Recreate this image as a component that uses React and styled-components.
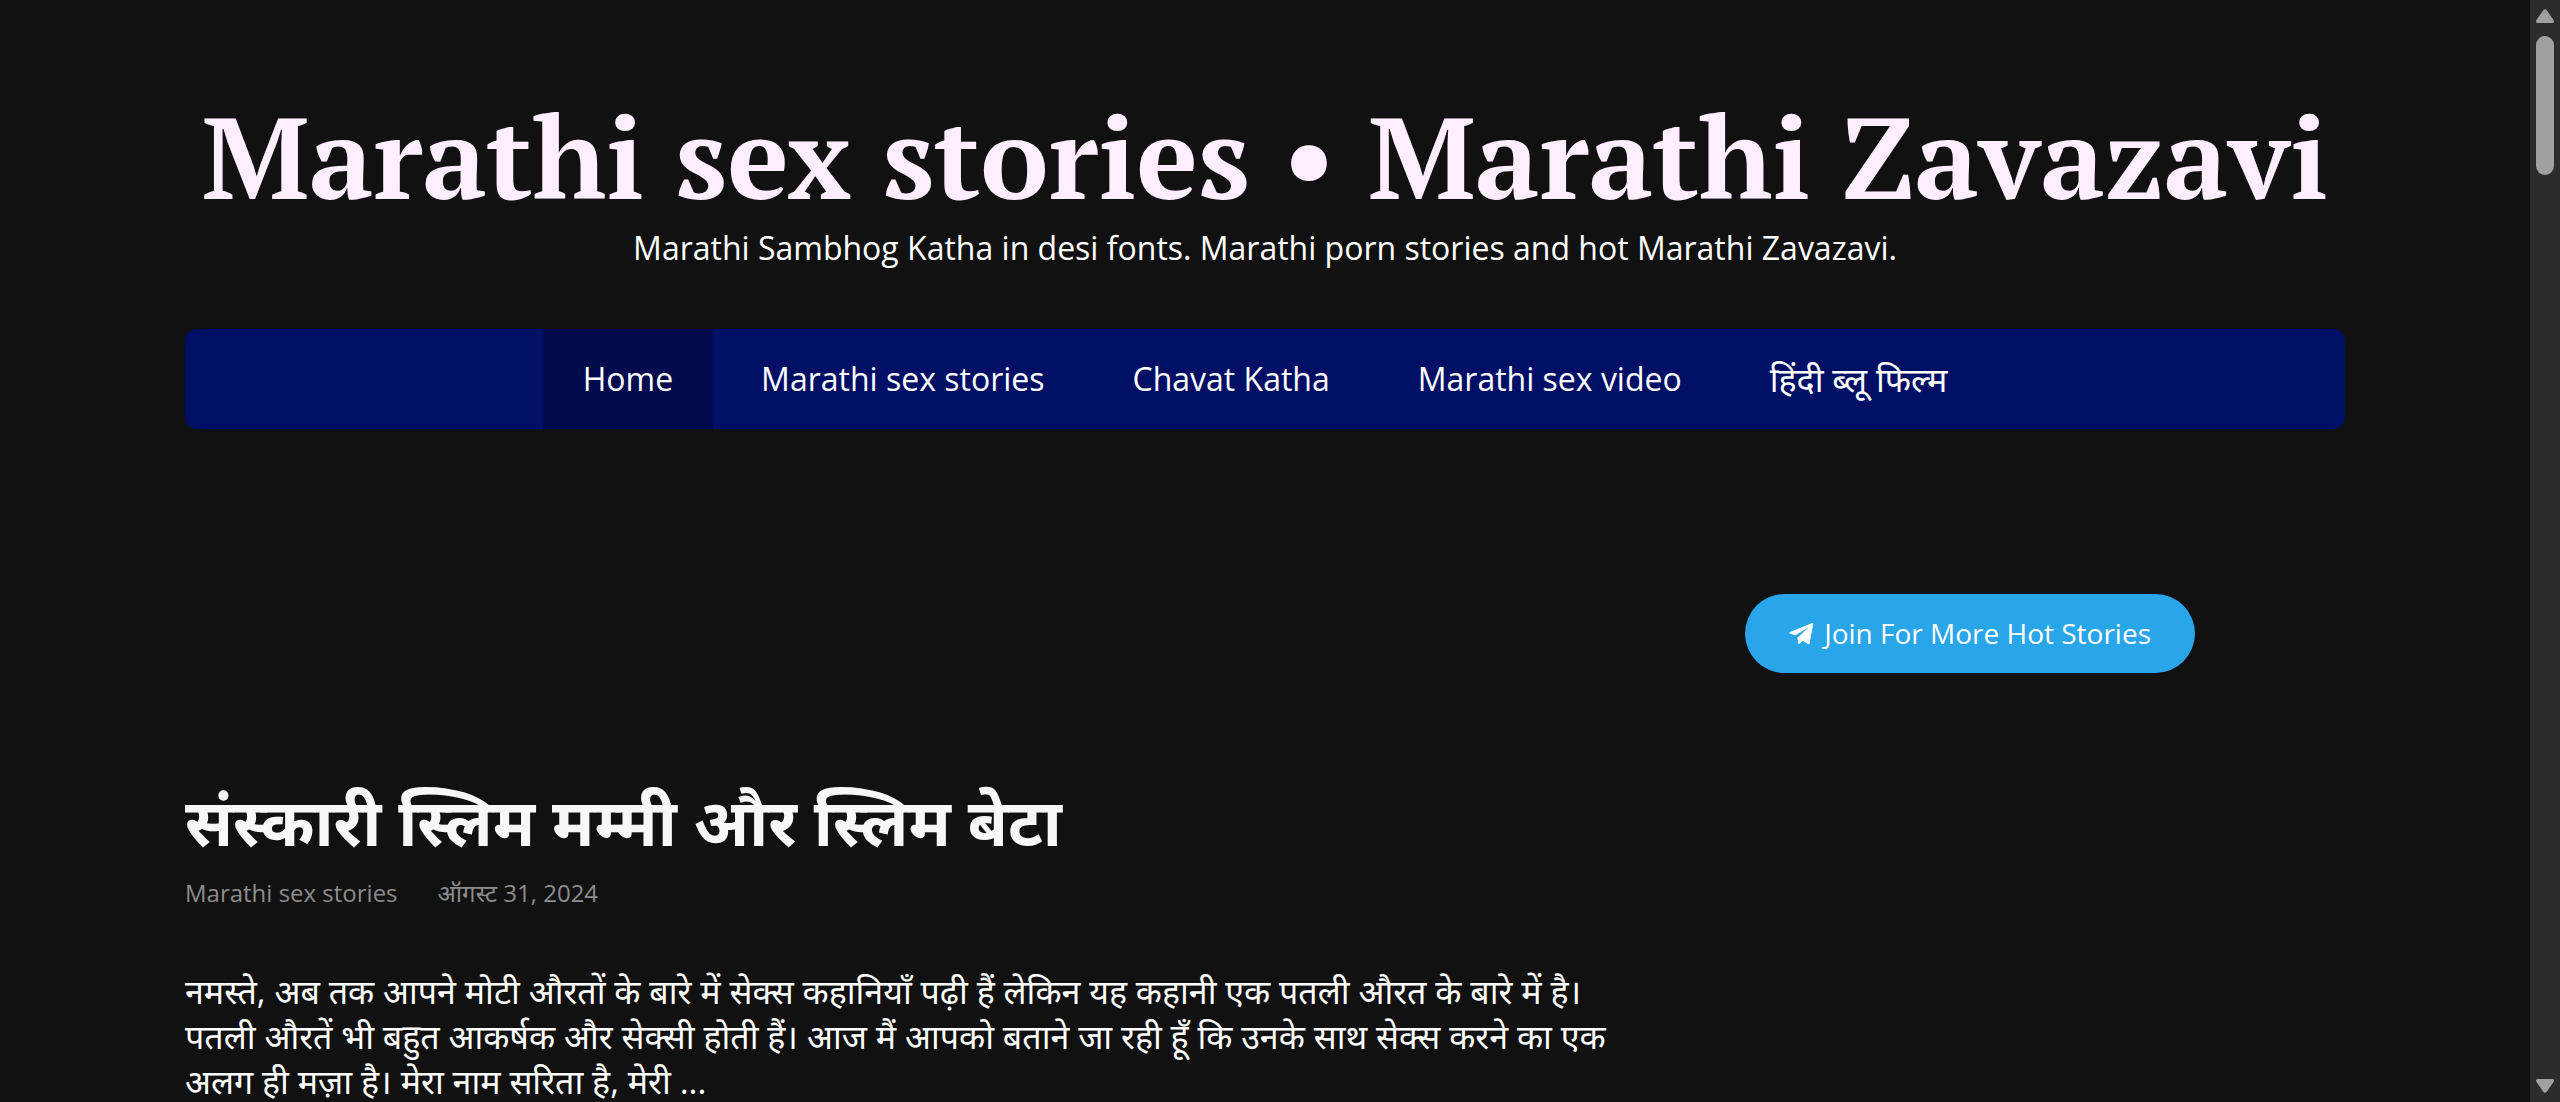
import React from "react";
import styled, { createGlobalStyle } from "styled-components";

const GlobalStyle = createGlobalStyle`
  * {
    box-sizing: border-box;
  }
  body {
    margin: 0;
    background-color: #111111;
    color: #ffffff;
    font-family: "Open Sans", "Noto Sans", "Noto Sans Devanagari", sans-serif;
    font-size: 32px;
    line-height: 45px;
  }
  a {
    color: inherit;
    text-decoration: none;
  }
`;

const Window = styled.div`
  display: flex;
  height: 100vh;
  overflow: hidden;
`;

const Page = styled.div`
  flex: 1;
  min-width: 0;
  padding: 91px 16px 0;
`;

const Container = styled.div`
  width: 100%;
  max-width: 2160px;
  margin: 0 auto;
`;

const Header = styled.header`
  text-align: center;
`;

const SiteTitle = styled.h1`
  margin: 0;
  color: #ffeeff;
  font-family: "PT Serif", "Liberation Serif", serif;
  font-size: 115px;
  font-weight: bold;
  line-height: 130px;
`;

const Tagline = styled.p`
  margin: 4px 0 0;
`;

const Nav = styled.nav`
  display: flex;
  justify-content: center;
  gap: 8px;
  margin-top: 59px;
  border-radius: 12px;
  background-color: #000f66;
`;

const NavLink = styled.a`
  padding: 0 40px;
  font-size: ${(props) => (props.lang === "hi" ? "34px" : "32px")};
  line-height: 100px;
  background-color: ${(props) => (props.$active ? "#000a4d" : "transparent")};
`;

const Promo = styled.aside`
  display: flex;
  justify-content: flex-end;
  padding: 165px 150px 0 0;
`;

const JoinLink = styled.a`
  display: flex;
  align-items: center;
  gap: 10px;
  height: 79px;
  padding: 0 44px;
  border-radius: 40px;
  background-color: #29a5e9;
  font-size: 28px;
`;

const Post = styled.article`
  max-width: 1440px;
  margin-top: 103px;
`;

const PostTitle = styled.h2`
  margin: 0;
  color: #f7f7f7;
  font-size: 65px;
  font-weight: bold;
  line-height: 90px;
`;

const Meta = styled.div`
  display: flex;
  gap: 40px;
  margin-top: 4px;
  color: #8c8c8c;
  font-size: 24px;
`;

const Excerpt = styled.p`
  margin: 54px 0 0;
  font-size: 34px;
`;

const ScrollBar = styled.div`
  display: flex;
  flex-direction: column;
  align-items: center;
  width: 30px;
  padding: 9px 0;
  background-color: #2c2c2c;
`;

const Thumb = styled.div`
  width: 18px;
  height: 139px;
  margin: 13px 0 auto;
  border-radius: 9px;
  background-color: #9f9f9f;
`;

const links = [
  { label: "Home", lang: "en" },
  { label: "Marathi sex stories", lang: "en" },
  { label: "Chavat Katha", lang: "en" },
  { label: "Marathi sex video", lang: "en" },
  { label: "हिंदी ब्लू फिल्म", lang: "hi" },
];

const PlaneIcon = () => (
  <svg width="25" height="22" viewBox="0 0 26 23" aria-hidden="true">
    <path
      fill="#ffffff"
      d="M24.2.1C25 0 25.4.5 25.2 1.300L21.500 21.200C21.300 22.300 20.500 22.300 19.800 21.900L14.200 18.500L11 21.700C10.300 22.300 9.600 22 9.500 21.100L8.700 15.400L20.800 4.300L6.300 13.100L1 11.100C-.1 10.700-.1 9.900 1 9.400Z"
    />
  </svg>
);

const Arrow = ({ down }) => (
  <svg width="18" height="14" viewBox="0 0 18 14" aria-hidden="true">
    <path
      fill="#9f9f9f"
      d={
        down
          ? "M2 0H16Q19 0 17.500 3L11 12.500Q9 15 7 12.500L.5 3Q-1 0 2 0Z"
          : "M2 14H16Q19 14 17.500 11L11 1.500Q9-1 7 1.500L.5 11Q-1 14 2 14Z"
      }
    />
  </svg>
);

const App = () => (
  <Window>
    <GlobalStyle />
    <Page>
      <Container>
        <Header>
          <SiteTitle>
            <a href="#home">Marathi sex stories • Marathi Zavazavi</a>
          </SiteTitle>
          <Tagline>
            Marathi Sambhog Katha in desi fonts. Marathi porn stories and hot
            Marathi Zavazavi.
          </Tagline>
        </Header>
        <Nav>
          {links.map((link, index) => (
            <NavLink
              key={link.label}
              href="#nav"
              lang={link.lang}
              $active={index === 0}
            >
              {link.label}
            </NavLink>
          ))}
        </Nav>
        <Promo>
          <JoinLink href="#join">
            <PlaneIcon />
            Join For More Hot Stories
          </JoinLink>
        </Promo>
        <Post>
          <PostTitle>
            <a href="#post">संस्कारी स्लिम मम्मी और स्लिम बेटा</a>
          </PostTitle>
          <Meta>
            <a href="#category">Marathi sex stories</a>
            <time dateTime="2024-08-31">ऑगस्ट 31, 2024</time>
          </Meta>
          <Excerpt>
            नमस्ते, अब तक आपने मोटी औरतों के बारे में सेक्स कहानियाँ पढ़ी हैं
            लेकिन यह कहानी एक पतली औरत के बारे में है। पतली औरतें भी बहुत आकर्षक
            और सेक्सी होती हैं। आज मैं आपको बताने जा रही हूँ कि उनके साथ सेक्स
            करने का एक अलग ही मज़ा है। मेरा नाम सरिता है, मेरी ...
          </Excerpt>
        </Post>
      </Container>
    </Page>
    <ScrollBar>
      <Arrow />
      <Thumb />
      <Arrow down />
    </ScrollBar>
  </Window>
);

export default App;
